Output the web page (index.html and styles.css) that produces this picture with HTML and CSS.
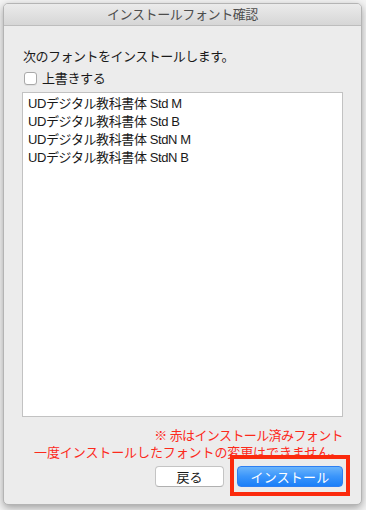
FILE: index.html
```html
<!DOCTYPE html>
<html lang="ja">
<head>
<meta charset="utf-8">
<title>インストールフォント確認</title>
<link rel="stylesheet" href="styles.css">
</head>
<body>
<div class="window">
  <div class="titlebar">インストールフォント確認</div>
  <div class="content">
    <div class="intro">次のフォントをインストールします。</div>
    <label class="check-row"><span class="checkbox"></span><span class="check-label">上書きする</span></label>
    <div class="list">
      <div class="item">UDデジタル教科書体 Std M</div>
      <div class="item">UDデジタル教科書体 Std B</div>
      <div class="item">UDデジタル教科書体 StdN M</div>
      <div class="item">UDデジタル教科書体 StdN B</div>
    </div>
    <div class="notes">
      <div class="note1">※ 赤はインストール済みフォント</div>
      <div class="note2">一度インストールしたフォントの変更はできません。</div>
    </div>
    <div class="buttons">
      <button class="btn btn-back">戻る</button>
      <div class="install-wrap">
        <button class="btn btn-install">インストール</button>
        <span class="highlight"></span>
      </div>
    </div>
  </div>
</div>
</body>
</html>
```
FILE: styles.css
```css
html, body {
  margin: 0;
  padding: 0;
  background: #f4f4f4;
}
body {
  font-family: "Liberation Sans", "Noto Sans CJK JP", sans-serif;
  font-size: 13px;
  color: #1a1a1a;
  width: 366px;
  height: 510px;
  overflow: hidden;
}
.window {
  margin: 3px 0 0 3px;
  width: 357px;
  height: 500px;
  border: 1px solid #b4b4b4;
  border-radius: 5px;
  background: #ececec;
  box-shadow: 0 3px 8px rgba(0, 0, 0, 0.35);
  display: flex;
  flex-direction: column;
  overflow: hidden;
}
.titlebar {
  height: 21px;
  line-height: 21px;
  text-align: center;
  color: #4d4d4d;
  letter-spacing: -0.4px;
  background: linear-gradient(#ebebeb, #d6d6d6);
  border-bottom: 1px solid #bdbdbd;
}
.content {
  padding: 22px 18px 0 18px;
  display: flex;
  flex-direction: column;
}
.intro {
  line-height: 17px;
  letter-spacing: -0.5px;
  padding-left: 1px;
}
.check-row {
  margin-top: 5px;
  height: 17px;
  display: flex;
  align-items: center;
  gap: 5px;
  padding-left: 2px;
}
.checkbox {
  width: 11px;
  height: 11px;
  border: 1px solid #a9a9a9;
  border-radius: 3px;
  background: #fff;
  box-shadow: 0 1px 0 rgba(0,0,0,0.05);
}
.check-label {
  line-height: 17px;
  letter-spacing: -0.3px;
}
.list {
  margin-top: 5px;
  height: 321px;
  border: 1px solid #c2c2c2;
  background: #fff;
  padding: 2px 5px 0 5px;
}
.item {
  line-height: 18px;
  letter-spacing: -0.4px;
}
.notes {
  margin-top: 10px;
  text-align: right;
  color: #fc2a1c;
  line-height: 17px;
}
.note1 {
  letter-spacing: -0.6px;
}
.note2 {
  letter-spacing: -0.1px;
}
.buttons {
  margin-top: 5px;
  display: flex;
  justify-content: flex-end;
  gap: 13px;
}
.btn {
  font-family: inherit;
  font-size: 13px;
  height: 21px;
  padding: 0;
  border-radius: 4px;
  margin: 0;
}
.btn-back {
  width: 69px;
  background: #fff;
  color: #1a1a1a;
  border: 1px solid #c4c4c4;
  border-bottom-color: #b0b0b0;
}
.install-wrap {
  position: relative;
  display: flex;
}
.btn-install {
  width: 106px;
  color: #fff;
  border: 1px solid #2d7ff2;
  background: linear-gradient(#6ab4fb, #3a95fb 50%, #1b7ff8);
  letter-spacing: 0.2px;
}
.highlight {
  position: absolute;
  left: -7px;
  right: -7px;
  top: -11px;
  bottom: -9px;
  border: 4px solid #fb2a0d;
  pointer-events: none;
}
```
